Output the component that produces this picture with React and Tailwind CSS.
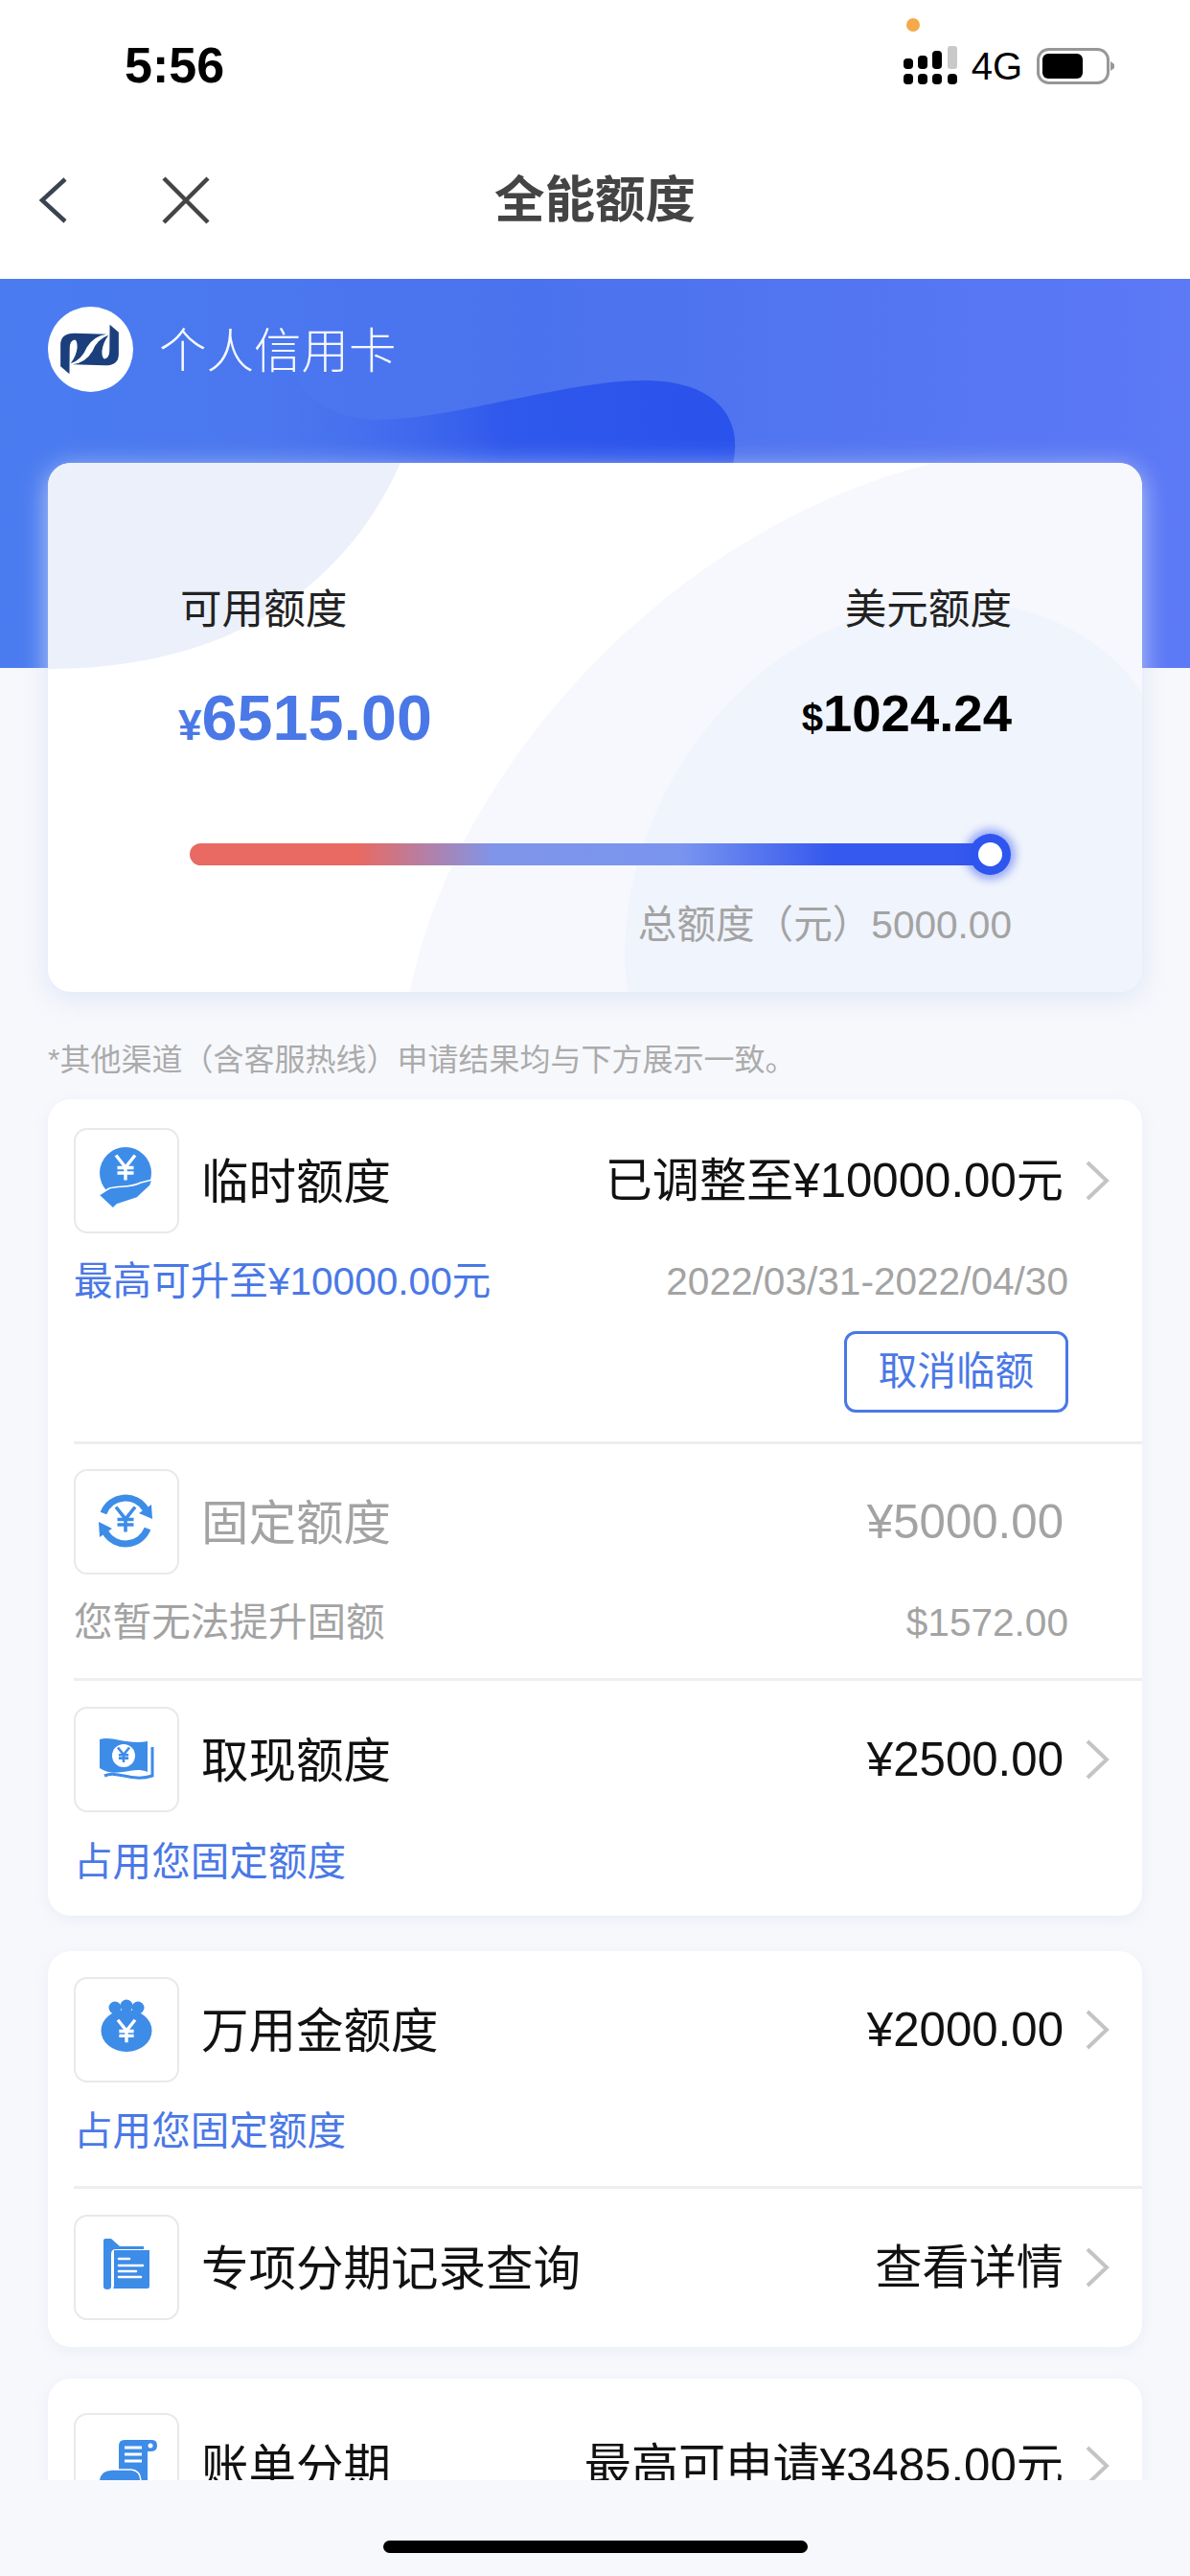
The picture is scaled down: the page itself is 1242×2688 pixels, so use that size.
const BLUE = "#3d8ce8";

function Yen({ cx, cy, s, color = "#fff", w = 3.4 }) {
  return (
    <path
      d={`M${cx - s} ${cy - s * 1.25}L${cx} ${cy}L${cx + s} ${cy - s * 1.25}M${cx} ${cy}V${cy + s * 1.35}M${cx - s * 0.85} ${cy + s * 0.05}H${cx + s * 0.85}M${cx - s * 0.85} ${cy + s * 0.6}H${cx + s * 0.85}`}
      fill="none"
      stroke={color}
      strokeWidth={w}
    />
  );
}

function HandIcon() {
  return (
    <>
      <circle cx="54" cy="47" r="27" fill={BLUE} />
      <Yen cx={54} cy={41} s={10} />
      <path d="M26 70L37 63C48 60 58 63 70 57L82 54L80 60L66 73L45 80L41 84Z" fill={BLUE} stroke="#fff" strokeWidth="1.5" />
    </>
  );
}
function CycleIcon() {
  return (
    <>
      <path d="M31 46A24.5 24.5 0 0 1 75 42" fill="none" stroke={BLUE} strokeWidth="7" />
      <path d="M68 46L82 52L81 37Z" fill={BLUE} />
      <path d="M77 62A24.5 24.5 0 0 1 33 66" fill="none" stroke={BLUE} strokeWidth="7" />
      <path d="M40 62L26 55L27 71Z" fill={BLUE} />
      <Yen cx={54} cy={52} s={10} color={BLUE} w={3.6} />
    </>
  );
}
function CashIcon() {
  return (
    <>
      <path d="M27 34C40 30 55 40 77 36V68C60 61 45 76 27 64Z" fill={BLUE} />
      <circle cx="52" cy="51" r="12" fill="#fff" />
      <Yen cx={52} cy={50} s={6} color={BLUE} w={2.6} />
      <path d="M32 72C46 66 60 79 82 72V42" fill="none" stroke={BLUE} strokeWidth="3" />
    </>
  );
}
function BagIcon() {
  return (
    <>
      <circle cx="43" cy="32" r="6.5" fill={BLUE} />
      <circle cx="67" cy="32" r="6.5" fill={BLUE} />
      <circle cx="55" cy="30" r="6.5" fill={BLUE} />
      <ellipse cx="55" cy="56" rx="26.5" ry="22" fill={BLUE} />
      <Yen cx={55} cy={56} s={9} />
    </>
  );
}
function DocIcon() {
  return (
    <>
      <path d="M31 27Q31 25 33 25H39L48 33H73V36H44Q39 36 39 41V75Q39 78 35 78Q31 78 31 75Z" fill={BLUE} />
      <path d="M42 37H79V75Q79 77 77 77H41Q42 76 42 74Z" fill={BLUE} />
      <path d="M47 46H58M47 53H72M47 59H65M47 65H70" stroke="#fff" strokeWidth="2.6" strokeLinecap="round" />
    </>
  );
}
function BillIcon() {
  return (
    <>
      <path d="M47 34Q47 28 53 28H82Q87 28 87 34Q87 40 80 40H77V72H47Z" fill={BLUE} />
      <circle cx="80" cy="34" r="2.5" fill="#fff" />
      <path d="M53 36H71M53 43H71M53 50H71" stroke="#fff" strokeWidth="3" />
      <path d="M26 72Q27 59 40 59H60Q70 60 70 72Z" fill={BLUE} stroke="#fff" strokeWidth="1.5" />
    </>
  );
}

function IconBox({ children }) {
  return (
    <div className="w-[110px] h-[110px] shrink-0 rounded-[14px] border-2 border-[#e9e9e9] bg-white">
      <svg width="106" height="106" viewBox="2 2 106 106">{children}</svg>
    </div>
  );
}

function Chevron() {
  return (
    <svg className="ml-[22px] shrink-0" width="26" height="42" viewBox="0 0 26 42" fill="none">
      <path d="M3 2L23 21L3 40" stroke="#c4c4c4" strokeWidth="4" />
    </svg>
  );
}

function Row({ icon, title, value, muted, chevron = true }) {
  const color = muted ? "text-[#a3a3a3]" : "text-[#111]";
  return (
    <div className="flex items-center pl-[27px] pr-[34px]">
      <IconBox>{icon}</IconBox>
      <div className={`ml-[23px] flex-1 pt-[3px] text-[49.5px] leading-[60px] ${color}`}>{title}</div>
      <div className={`text-[49.2px] leading-[60px] whitespace-nowrap ${color}`}>{value}</div>
      {chevron ? <Chevron /> : <div className="ml-[22px] w-[26px]" />}
    </div>
  );
}

function Sub({ left, right, muted, className = "" }) {
  return (
    <div className={`flex justify-between pl-[27px] pr-[77px] text-[40.6px] leading-[50px] ${className}`}>
      <span className={muted ? "text-[#a3a3a3]" : "text-[#4a78e6]"}>{left}</span>
      {right && <span className="text-[#a3a3a3]">{right}</span>}
    </div>
  );
}

function Divider() {
  return <div className="ml-[27px] h-[3px] bg-[#eeeeee]" />;
}

function Card({ className = "", children }) {
  return (
    <div className={`mx-[50px] rounded-[24px] bg-white shadow-[0_4px_14px_rgba(200,210,230,0.25)] ${className}`}>
      {children}
    </div>
  );
}

const LOGO_RIBBON = "M13.3 40Q13.3 28 28 28L62 29Q48 31 41 43Q36 56 24 60Q30 52 31 43Q31 35 28 35Q23 36 23 44L22.7 71L13.3 63Z";

export default function App() {
  return (
    <div className="w-[1242px] h-[2688px] flex flex-col overflow-hidden bg-[#f7f8fc] [font-family:'Liberation_Sans','Noto_Sans_CJK_SC',sans-serif]">
      {/* status + nav */}
      <div className="h-[291px] shrink-0 bg-white flex flex-col">
        <div className="relative h-[110px] flex items-center justify-between pl-[130px] pr-[79px] pt-[28px]">
          <span className="text-[52px] leading-[60px] font-bold text-black -mt-[2px]">5:56</span>
          <div className="absolute left-[946px] top-[19px] w-[14px] h-[14px] rounded-full bg-[#f5a94a]" />
          <div className="flex items-center">
            <svg width="58" height="42" viewBox="0 0 58 42">
              <rect x="1" y="13" width="10" height="11" rx="4" fill="#000" />
              <rect x="16" y="10" width="10" height="14" rx="4" fill="#000" />
              <rect x="31" y="5" width="10" height="19" rx="4" fill="#000" />
              <rect x="47" y="0" width="10" height="24" rx="3" fill="#c9c9c9" />
              <rect x="1" y="29" width="10" height="11" rx="4" fill="#000" />
              <rect x="16" y="29" width="10" height="11" rx="4" fill="#000" />
              <rect x="31" y="29" width="10" height="11" rx="4" fill="#000" />
              <rect x="47" y="29" width="10" height="11" rx="4" fill="#000" />
            </svg>
            <span className="ml-[14px] text-[40px] leading-[44px] text-black">4G</span>
            <svg className="ml-[15px]" width="81" height="38" viewBox="0 0 81 38">
              <rect x="1.5" y="1.5" width="73" height="35" rx="11" fill="#fff" stroke="#979797" strokeWidth="3" />
              <rect x="6" y="6" width="42" height="26" rx="6" fill="#000" />
              <path d="M77 14L81 17V21L77 24Z" fill="#979797" />
            </svg>
          </div>
        </div>
        <div className="relative h-[60px] flex items-center justify-center mt-[69px]">
          <svg className="absolute left-[38px] top-[5px]" width="34" height="50" viewBox="0 0 34 50" fill="none">
            <path d="M30 3L6 25L30 47" stroke="#3c4350" strokeWidth="4.5" />
          </svg>
          <svg className="absolute left-[168px] top-[5px]" width="52" height="50" viewBox="0 0 52 50" fill="none">
            <path d="M3 2L49 48M49 2L3 48" stroke="#444" strokeWidth="4.5" />
          </svg>
          <span className="text-[52.5px] leading-[60px] font-bold text-[#444]">全能额度</span>
        </div>
      </div>

      <div className="flex-1 min-h-0 overflow-hidden flex flex-col">
        {/* blue header */}
        <div className="relative h-[406px] shrink-0 overflow-hidden bg-[linear-gradient(90deg,#4a7cf0_0%,#4b72ee_45%,#5c79f6_100%)]">
          <svg className="absolute inset-0" width="1242" height="406" viewBox="0 121 1242 406">
            <defs>
              <linearGradient id="wave" x1="0" x2="1" y1="0" y2="0">
                <stop offset="0" stopColor="#4a74ee" stopOpacity="0.2" />
                <stop offset="0.5" stopColor="#2f58ec" />
                <stop offset="1" stopColor="#2a52ec" />
              </linearGradient>
            </defs>
            <path d="M285 121C285 180 300 268 396 268C470 268 590 227 673 227C735 227 770 255 767 300C766 313 763 325 760 340H285Z" fill="url(#wave)" />
          </svg>
          <div className="relative flex items-center pl-[50px] pt-[29px]">
            <div className="w-[89px] h-[89px] rounded-full bg-white">
              <svg width="89" height="89" viewBox="0 0 90 90">
                <path d={LOGO_RIBBON} fill="#1b3f7c" />
                <path d={LOGO_RIBBON} fill="#1b3f7c" transform="rotate(180 44 45)" />
              </svg>
            </div>
            <span className="ml-[27px] pt-[4px] text-[49.5px] leading-[60px] font-light text-white/95">个人信用卡</span>
          </div>
        </div>

        {/* hero card */}
        <div className="relative mx-[50px] -mt-[214px] h-[552px] shrink-0 rounded-[24px] bg-white shadow-[0_6px_28px_rgba(215,225,245,0.8)]">
          <svg className="absolute inset-0 rounded-[24px]" width="1142" height="552" viewBox="0 0 1142 552">
            <path d="M24 0H368C310 130 190 215 0 215V24Q0 0 24 0Z" fill="#ebf0fb" />
            <path d="M925 0H1118Q1142 0 1142 24V528Q1142 552 1118 552H378C420 330 640 70 925 0Z" fill="#f6f8fd" />
            <path d="M605 552C580 380 720 145 950 145C1040 145 1110 190 1142 240V528Q1142 552 1118 552Z" fill="#f0f4fc" />
          </svg>
          <div className="relative flex flex-col h-full pt-[128px]">
            <div className="flex justify-between pl-[138px] pr-[136px] text-[43.6px] leading-[50px] text-[#222]">
              <span>可用额度</span>
              <span>美元额度</span>
            </div>
            <div className="mt-[48px] h-[80px] flex justify-between pl-[136px] pr-[136px] font-bold">
              <span className="text-[66.5px] leading-[80px] text-[#4a78e6]">
                <span className="text-[44px]">¥</span>6515.00
              </span>
              <span className="text-[54.5px] leading-[72px] text-black">
                <span className="text-[40px]">$</span>1024.24
              </span>
            </div>
            <div className="relative mt-[91px] ml-[148px] w-[838px] h-[23px] rounded-full bg-[linear-gradient(90deg,#e86a62_0%,#e86a62_21%,#7f95ea_38%,#7a95ef_61%,#3558ee_80%,#3558ee_100%)]">
              <div className="absolute -right-[10px] top-[-1px] w-[25px] h-[25px] rounded-full bg-white shadow-[0_0_0_9px_#2f55ef,0_0_8px_14px_rgba(47,85,239,0.45)]" />
            </div>
            <div className="mt-[37px] pr-[136px] text-right text-[40.6px] leading-[50px] text-[#a3a3a3]">总额度（元）5000.00</div>
          </div>
        </div>

        <div className="mt-[46px] ml-[50px] text-[32px] leading-[50px] text-[#ababab]">*其他渠道（含客服热线）申请结果均与下方展示一致。</div>

        <Card className="mt-[16px] pt-[30px] pb-[31px] shrink-0">
          <Row icon={<HandIcon />} title="临时额度" value="已调整至¥10000.00元" />
          <Sub className="mt-[25px]" left="最高可升至¥10000.00元" right="2022/03/31-2022/04/30" />
          <div className="mt-[27px] flex justify-end pr-[77px]">
            <div className="w-[234px] h-[85px] flex items-center justify-center rounded-[12px] border-[3px] border-[#4a78e6] text-[40.6px] text-[#4a78e6]">取消临额</div>
          </div>
          <div className="h-[30px]" />
          <Divider />
          <div className="h-[26px]" />
          <Row icon={<CycleIcon />} title="固定额度" value="¥5000.00" muted chevron={false} />
          <Sub className="mt-[25px] mb-[33px]" left="您暂无法提升固额" right="$1572.00" muted />
          <Divider />
          <div className="h-[27px]" />
          <Row icon={<CashIcon />} title="取现额度" value="¥2500.00" />
          <Sub className="mt-[27px]" left="占用您固定额度" />
        </Card>

        <Card className="mt-[37px] pt-[27px] pb-[28px] shrink-0">
          <Row icon={<BagIcon />} title="万用金额度" value="¥2000.00" />
          <Sub className="mt-[26px] mb-[32px]" left="占用您固定额度" />
          <Divider />
          <div className="h-[27px]" />
          <Row icon={<DocIcon />} title="专项分期记录查询" value="查看详情" />
        </Card>

        <Card className="mt-[33px] pt-[36px] pb-[28px] shrink-0">
          <Row icon={<BillIcon />} title="账单分期" value="最高可申请¥3485.00元" />
        </Card>
      </div>

      {/* home indicator */}
      <div className="h-[100px] shrink-0 flex justify-center bg-[#f7f8fc] pt-[63px]">
        <div className="w-[443px] h-[13px] rounded-full bg-black" />
      </div>
    </div>
  );
}
